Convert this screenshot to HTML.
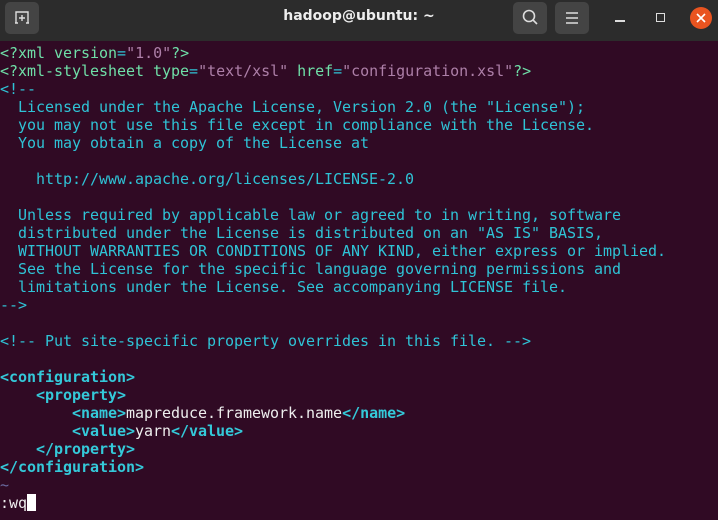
<!DOCTYPE html>
<html><head><meta charset="utf-8"><style>
body{margin:0;width:718px;height:520px;background:#300a24;overflow:hidden;position:relative}
.tb{position:absolute;left:0;top:0;width:718px;height:41px;background:#2c2c2c}
.title{position:absolute;top:8px;width:718px;text-align:center;line-height:20px;height:20px;color:#eee;font:bold 14px "DejaVu Sans","Liberation Sans",sans-serif}
.btn{position:absolute;top:2px;width:34px;height:32px;background:#444;border-radius:5px}
pre{position:absolute;left:0;top:44px;margin:0;font:15px/18px "DejaVu Sans Mono","Liberation Mono",monospace;color:#2fc3d6;letter-spacing:-0.03px}
.g{color:#6fe0a8}.p{color:#ad7fa8}.t{color:#34c9d9;font-weight:bold}.w{color:#eee}
.cur{display:inline-block;width:9px;height:17px;background:#fff;vertical-align:top}
</style></head><body>
<div class="tb"></div>
<div class="btn" style="left:5px"></div>
<svg style="position:absolute;left:14px;top:10px" width="18" height="16"><path d="M2 13V2h12v11M1 13h3M12 13h3M8 5v6M5 8h6" stroke="#ddd" stroke-width="1.4" fill="none"/></svg>
<div class="title">hadoop@ubuntu: ~</div>
<div class="btn" style="left:513px"></div>
<svg style="position:absolute;left:521px;top:8px" width="18" height="18"><circle cx="8" cy="8" r="5.5" stroke="#ddd" stroke-width="1.6" fill="none"/><path d="M12 12l4 4" stroke="#ddd" stroke-width="1.6"/></svg>
<div class="btn" style="left:555px"></div>
<svg style="position:absolute;left:564px;top:11px" width="16" height="14"><path d="M2 2h12M2 7h12M2 12h12" stroke="#ddd" stroke-width="1.4"/></svg>
<div style="position:absolute;left:615px;top:20px;width:10px;height:1.5px;background:#ddd"></div>
<div style="position:absolute;left:656px;top:13px;width:7px;height:7px;border:1.5px solid #ddd"></div>
<div style="position:absolute;left:690px;top:7px;width:22px;height:22px;border-radius:50%;background:#e95420"></div>
<svg style="position:absolute;left:690px;top:7px" width="22" height="22"><path d="M7 7l8 8M15 7l-8 8" stroke="#fff" stroke-width="1.6"/></svg>
<pre><span class="g">&lt;?xml</span> <span class="g">version</span>=<span class="p">"1.0"</span><span class="g">?&gt;</span>
<span class="g">&lt;?xml-stylesheet</span> <span class="g">type</span>=<span class="p">"text/xsl"</span> <span class="g">href</span>=<span class="p">"configuration.xsl"</span><span class="g">?&gt;</span>
&lt;!--
  Licensed under the Apache License, Version 2.0 (the "License");
  you may not use this file except in compliance with the License.
  You may obtain a copy of the License at

    http://www.apache.org/licenses/LICENSE-2.0

  Unless required by applicable law or agreed to in writing, software
  distributed under the License is distributed on an "AS IS" BASIS,
  WITHOUT WARRANTIES OR CONDITIONS OF ANY KIND, either express or implied.
  See the License for the specific language governing permissions and
  limitations under the License. See accompanying LICENSE file.
--&gt;

&lt;!-- Put site-specific property overrides in this file. --&gt;

<span class="t">&lt;configuration&gt;</span>
    <span class="t">&lt;property&gt;</span>
        <span class="t">&lt;name&gt;</span><span class="w">mapreduce.framework.name</span><span class="t">&lt;/name&gt;</span>
        <span class="t">&lt;value&gt;</span><span class="w">yarn</span><span class="t">&lt;/value&gt;</span>
    <span class="t">&lt;/property&gt;</span>
<span class="t">&lt;/configuration&gt;</span>
<span style="color:#6a6aa0">~</span>
<span class="w">:wq</span><span class="cur"></span></pre>
</body></html>
